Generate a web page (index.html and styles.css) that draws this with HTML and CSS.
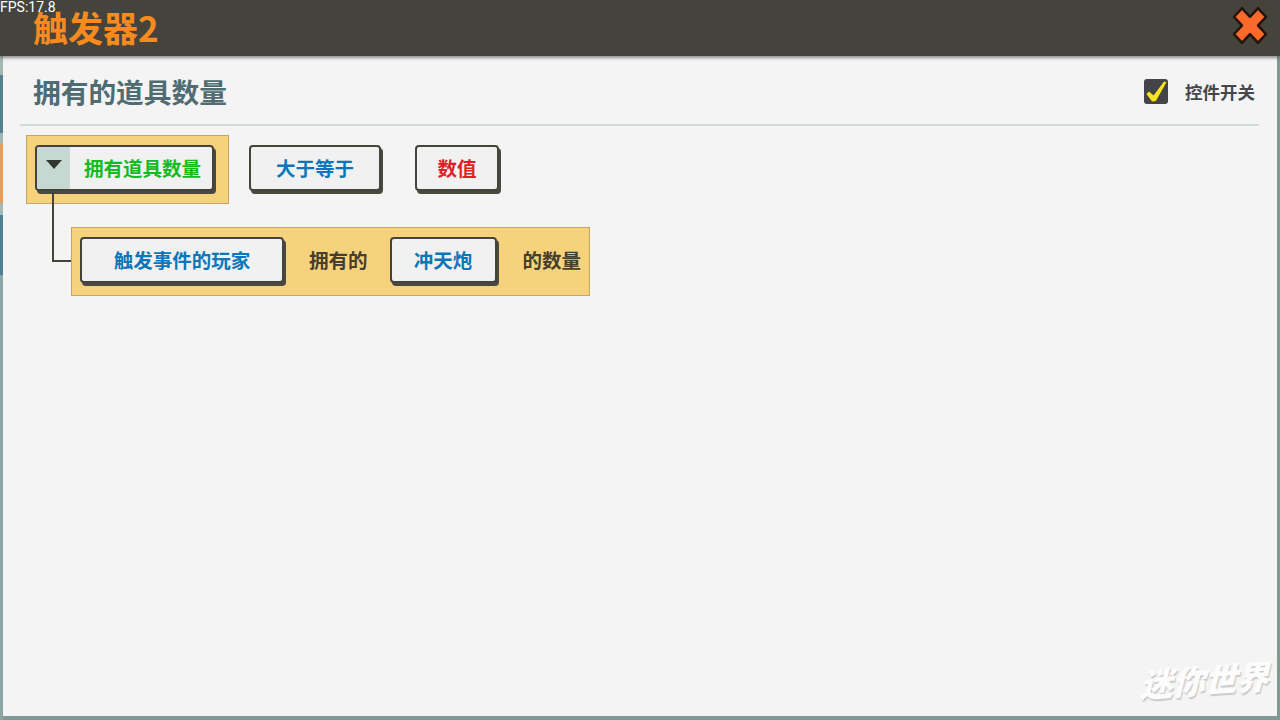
FILE: index.html
```html
<!DOCTYPE html>
<html lang="zh">
<head>
<meta charset="utf-8">
<title>触发器2</title>
<link rel="stylesheet" href="styles.css">
</head>
<body>
<div class="backdrop">
  <div class="side-strip"><i class="s1"></i><i class="s2"></i><i class="s3"></i><i class="s4"></i><i class="s5"></i><i class="s6"></i></div>
  <header class="topbar">
    <h1 class="app-title">触发器2</h1>
    <button class="close" aria-label="关闭">
      <svg viewBox="0 0 38 38" width="38" height="41" preserveAspectRatio="none">
        <path d="M27 3 L35 11 L27 19 L35 27 L27 35 L19 27 L11 35 L3 27 L11 19 L3 11 L11 3 L19 11 Z" fill="#fb6a2a" stroke="#24140c" stroke-width="2.400" stroke-linejoin="round"/>
      </svg>
    </button>
  </header>
  <span class="fps">FPS:17.8</span>
  <main class="panel">
    <div class="panel-head">
      <h2 class="panel-title">拥有的道具数量</h2>
      <label class="toggle">
        <span class="check">
          <svg viewBox="0 0 24 25" width="24" height="25">
            <path d="M2 15 L5 12 L9.500 16 L20 2 L23 3 L12 22.500 L8 23 Z" fill="#f5e326" stroke="#2c2a1e" stroke-width="0.600" stroke-linejoin="round"/>
          </svg>
        </span>
        <span class="toggle-label">控件开关</span>
      </label>
    </div>
    <div class="rule"></div>
    <section class="expr">
      <div class="row-one">
        <div class="slot slot-main">
          <button class="btn btn-fold">
            <span class="fold"><i class="tri"></i></span>
            <span class="fold-text green">拥有道具数量</span>
          </button>
        </div>
        <button class="btn btn-op blue">大于等于</button>
        <button class="btn btn-val red">数值</button>
      </div>
      <div class="row-two">
        <i class="link"></i>
        <div class="slot slot-sub">
          <button class="btn btn-player blue">触发事件的玩家</button>
          <span class="word word-a">拥有的</span>
          <button class="btn btn-item blue">冲天炮</button>
          <span class="word word-b">的数量</span>
        </div>
      </div>
    </section>
    <span class="watermark">迷你世界</span>
  </main>
</div>
</body>
</html>
```
FILE: styles.css
```css
* { box-sizing: border-box; }
html, body { margin: 0; height: 100%; }
body { overflow: hidden; background: #7d9a94; font-family: "Noto Sans CJK SC", "Noto Sans", sans-serif; }
.backdrop { position: relative; width: 1280px; height: 720px; display: flex; flex-direction: column; padding-bottom: 4px; }
.side-strip { position: absolute; left: 0; top: 56px; width: 3px; height: 664px; display: flex; flex-direction: column; }
.side-strip i { display: block; }
.s1 { height: 19px; background: #a3b8b5; }
.s2 { height: 58px; background: #55808e; }
.s3 { height: 10px; background: #a3b8b5; }
.s4 { height: 60px; background: #eb9d55; }
.s5 { height: 12px; background: #a3b8b5; }
.s6 { flex: 1; background: linear-gradient(#4f7f8e 60px, #8ca5a2 60px); }
.topbar { height: 56px; flex: none; display: flex; align-items: center; justify-content: space-between; padding: 0 11px 0 33px; background: #45443c; box-shadow: 0 2px 3px rgba(60, 60, 60, .55); position: relative; z-index: 2; }
.app-title { margin: 0; font-size: 35px; line-height: 44px; font-weight: 700; color: #f98a1e; transform: translateY(-1px); }
.close { padding: 0; border: 0; background: none; display: flex; transform: translateY(-3px); }
.fps { position: absolute; left: 0; top: -1px; z-index: 3; font: 14px/16px "Roboto", sans-serif; color: #fff; }
.panel { position: relative; flex: 1; margin: 0 3px 0 3px; background: #f4f4f4; display: flex; flex-direction: column; }
.panel-head { height: 68px; flex: none; display: flex; align-items: center; justify-content: space-between; padding: 2px 22px 0 30px; }
.panel-title { margin: 0; font-size: 27.700px; line-height: 36px; font-weight: 700; color: #4f6c72; }
.toggle { display: flex; align-items: center; gap: 17px; margin-top: 1px; }
.check { width: 24px; height: 25px; border-radius: 3px; background: #45444a; display: block; }
.check svg { display: block; }
.toggle-label { font-size: 17.500px; line-height: 22px; font-weight: 700; color: #45474a; }
.rule { height: 2px; flex: none; margin: 0 18px 0 17px; background: #cfdcda; }
.expr { position: relative; padding: 9px 0 0 23px; display: flex; flex-direction: column; gap: 23px; }
.row-one { display: flex; align-items: flex-start; }
.slot { display: flex; align-items: flex-start; height: 69px; padding-top: 9px; background: #f6d27c; border: 1px solid #c4a566; }
.slot-main { width: 203px; padding-left: 8px; }
.row-two { position: relative; margin-left: 45px; }
.slot-sub { width: 519px; padding-left: 8px; }
.btn { height: 46px; padding: 0; margin: 0; display: flex; align-items: center; justify-content: center; border: 2px solid #45443c; border-radius: 4px; background: #f1f1f1; box-shadow: 2px 3px 0 #4a4940; font-family: inherit; font-size: 19.500px; line-height: 26px; font-weight: 700; }
.btn-fold { width: 179px; overflow: hidden; justify-content: flex-start; align-items: stretch; }
.fold { width: 33px; flex: none; background: #c5d8d2; display: flex; justify-content: center; padding-top: 13px; }
.tri { width: 0; height: 0; border-left: 8px solid transparent; border-right: 8px solid transparent; border-top: 9px solid #33352f; }
.fold-text { align-self: center; margin-left: 14px; white-space: nowrap; }
.btn-op { width: 132px; margin: 10px 0 0 20px; }
.btn-val { width: 84px; margin: 10px 0 0 34px; }
.btn-player { width: 204px; }
.btn-item { width: 107px; }
.word { font-size: 19.500px; line-height: 46px; font-weight: 700; color: #453f2c; white-space: nowrap; }
.word-a { margin-left: 25px; margin-right: 22px; }
.word-b { margin-left: 26px; }
.blue { color: #0b76b8; }
.green { color: #12bb1e; }
.red { color: #df1f26; }
.link { position: absolute; left: -19px; top: -35px; width: 19px; height: 70px; border-left: 2px solid #45443c; border-bottom: 2px solid #45443c; }
.watermark { position: absolute; right: 9px; bottom: 17px; font-size: 33px; line-height: 40px; font-weight: 900; font-style: italic; color: #fcfcfc; letter-spacing: -1px; text-shadow: 1px 2px 1px #cbcbcb; transform: skewY(-4deg); }
```
